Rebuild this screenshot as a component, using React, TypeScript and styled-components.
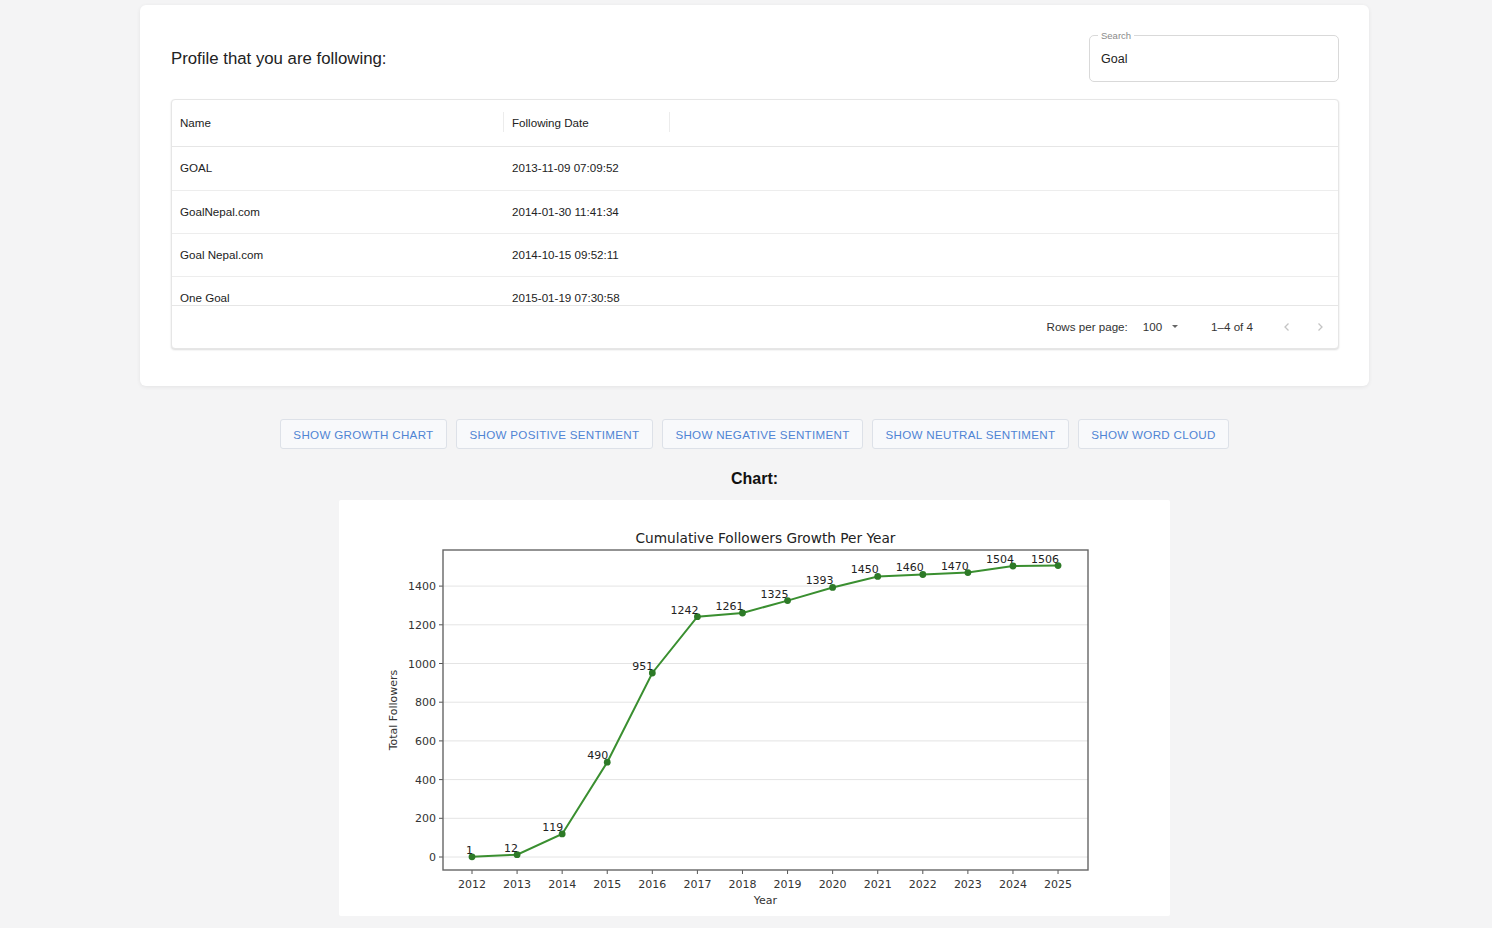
import React from 'react';
import styled, { createGlobalStyle } from 'styled-components';

const Global = createGlobalStyle`
  html, body { margin: 0; padding: 0; background: #f4f4f5; }
  body { font-family: "Liberation Sans", Arial, Helvetica, sans-serif; color: #222; }
  * { box-sizing: border-box; }
`;

const Page = styled.main`
  width: 1229px;
  margin-left: 140px;
  padding-top: 5px;
  display: flex;
  flex-direction: column;
  align-items: center;
`;

const Card = styled.section`
  width: 100%;
  height: 381px;
  background: #fff;
  border-radius: 6px;
  box-shadow: 0 1px 4px rgba(0, 0, 0, 0.07);
  padding: 30px 30px 0 31px;
`;

const CardHeader = styled.div`
  display: flex;
  justify-content: space-between;
  align-items: center;
  height: 47px;
  margin-bottom: 17px;
`;

const Title = styled.h2`
  margin: 0;
  font-size: 16.8px;
  font-weight: 400;
  color: #222;
  padding-top: 1px;
`;

const SearchBox = styled.div`
  position: relative;
  width: 250px;
  height: 47px;
  border: 1px solid #d9d9d9;
  border-radius: 5px;
  display: flex;
  align-items: center;
  padding-left: 11px;
  font-size: 12.5px;
  color: #222;
`;

const SearchLabel = styled.span`
  position: absolute;
  top: -6px;
  left: 8px;
  padding: 0 3px;
  background: #fff;
  font-size: 9.5px;
  line-height: 11px;
  color: #8a8a8a;
`;

const Grid = styled.div`
  width: 100%;
  border: 1px solid #e6e6e6;
  border-radius: 4px;
  box-shadow: 0 1px 2px rgba(0, 0, 0, 0.14);
  font-size: 11.6px;
  color: #222;
  background: #fff;
`;

const GridRow = styled.div<{ $head?: boolean; $first?: boolean }>`
  display: grid;
  grid-template-columns: 332px 166px 1fr;
  height: ${(p) => (p.$head ? '46px' : '43px')};
  align-items: center;
  padding-bottom: 2px;
  border-top: ${(p) => (p.$head || p.$first ? 'none' : '1px solid #ededed')};
`;

const HeadCell = styled.div<{ $sep?: boolean }>`
  position: relative;
  height: 100%;
  display: flex;
  align-items: center;
  padding-left: 8px;
  &::after {
    content: '';
    display: ${(p) => (p.$sep ? 'block' : 'none')};
    position: absolute;
    right: 0;
    top: 12px;
    height: 20px;
    width: 1px;
    background: #ececec;
  }
`;

const Cell = styled.div`
  padding-left: 8px;
`;

const GridBody = styled.div`
  height: 159px;
  overflow: hidden;
  border-top: 1px solid #e6e6e6;
`;

const Footer = styled.div`
  height: 43px;
  border-top: 1px solid #e6e6e6;
  display: flex;
  align-items: center;
  justify-content: flex-end;
  padding-right: 5px;
  padding-bottom: 1px;
  font-size: 11.6px;
  color: #333;
`;

const RowsLabel = styled.span`
  margin-right: 15px;
`;

const RowsSelect = styled.span`
  display: flex;
  align-items: center;
  gap: 10px;
  margin-right: 33px;
`;

const Caret = styled.span`
  width: 0;
  height: 0;
  border-left: 3.5px solid transparent;
  border-right: 3.5px solid transparent;
  border-top: 3.5px solid #666;
`;

const Range = styled.span`
  margin-right: 14px;
`;

const PageBtn = styled.span`
  width: 26px;
  height: 26px;
  display: flex;
  align-items: center;
  justify-content: center;
  color: #c4c4c4;
  margin-left: 7px;
`;

const ButtonRow = styled.div`
  margin-top: 33px;
  display: flex;
  gap: 9px;
`;

const ActionButton = styled.button`
  height: 30px;
  padding: 0 12.5px;
  border: 1px solid #dde1e8;
  border-radius: 3px;
  background: #f8f9fb;
  color: #4f84d4;
  font-family: "Liberation Sans", Arial, sans-serif;
  font-size: 11.6px;
  font-weight: 400;
  letter-spacing: 0.3px;
  text-transform: uppercase;
  cursor: pointer;
`;

const ChartHeading = styled.h3`
  margin: 20px 0 12px;
  font-size: 16px;
  line-height: 19px;
  font-weight: 700;
  color: #111;
`;

const ChartCard = styled.div`
  width: 831px;
  height: 416px;
  background: #fff;
  border-radius: 2px;
`;

const rows = [
  ['GOAL', '2013-11-09 07:09:52'],
  ['GoalNepal.com', '2014-01-30 11:41:34'],
  ['Goal Nepal.com', '2014-10-15 09:52:11'],
  ['One Goal', '2015-01-19 07:30:58'],
];

const buttons = [
  'Show Growth Chart',
  'Show Positive Sentiment',
  'Show Negative Sentiment',
  'Show Neutral Sentiment',
  'Show Word Cloud',
];

const data: [number, number][] = [
  [2012, 1], [2013, 12], [2014, 119], [2015, 490], [2016, 951], [2017, 1242],
  [2018, 1261], [2019, 1325], [2020, 1393], [2021, 1450], [2022, 1460],
  [2023, 1470], [2024, 1504], [2025, 1506],
];

const AX_L = 104;
const AX_R = 749;
const AX_T = 50;
const AX_B = 370;
const xp = (yr: number) => 133 + (yr - 2012) * 45.08;
const yp = (v: number) => 357 - v * 0.1935;

const GrowthChart: React.FC = () => {
  const yTicks = [0, 200, 400, 600, 800, 1000, 1200, 1400];
  const pts = data.map(([x, y]) => `${xp(x)},${yp(y)}`).join(' ');
  const font = '"DejaVu Sans", Verdana, sans-serif';
  return (
    <svg width={831} height={416} viewBox="0 0 831 416" fontFamily={font}>
      <text x={426.5} y={43} fontSize={13.7} textAnchor="middle" fill="#222">
        Cumulative Followers Growth Per Year
      </text>
      {yTicks.map((t) => (
        <g key={t}>
          <line x1={AX_L} x2={AX_R} y1={yp(t)} y2={yp(t)} stroke="#e4e4e4" strokeWidth={1} />
          <line x1={AX_L - 4} x2={AX_L} y1={yp(t)} y2={yp(t)} stroke="#555" strokeWidth={1} />
          <text x={AX_L - 7} y={yp(t) + 4} fontSize={11} textAnchor="end" fill="#333">
            {t}
          </text>
        </g>
      ))}
      {data.map(([yr]) => (
        <g key={yr}>
          <line x1={xp(yr)} x2={xp(yr)} y1={AX_B} y2={AX_B + 4} stroke="#555" strokeWidth={1} />
          <text x={xp(yr)} y={AX_B + 18} fontSize={11} textAnchor="middle" fill="#333">
            {yr}
          </text>
        </g>
      ))}
      <rect x={AX_L} y={AX_T} width={AX_R - AX_L} height={AX_B - AX_T} fill="none" stroke="#666" strokeWidth={1.4} />
      <polyline points={pts} fill="none" stroke="#3a8f30" strokeWidth={2} />
      {data.map(([x, y]) => (
        <circle key={x} cx={xp(x)} cy={yp(y)} r={3.4} fill="#2d7a27" />
      ))}
      {data.map(([x, y]) => (
        <text key={`l${x}`} x={xp(x) + 1} y={yp(y) - 3} fontSize={11} textAnchor="end" fill="#222">
          {y}
        </text>
      ))}
      <text x={426.5} y={404} fontSize={11} textAnchor="middle" fill="#333">
        Year
      </text>
      <text
        x={58}
        y={210}
        fontSize={11}
        textAnchor="middle"
        fill="#333"
        transform="rotate(-90 58 210)"
      >
        Total Followers
      </text>
    </svg>
  );
};

const ChevronLeft = () => (
  <svg width="10" height="10" viewBox="0 0 10 10">
    <path d="M6.5 1.5 L3 5 L6.5 8.5" fill="none" stroke="currentColor" strokeWidth="1.3" />
  </svg>
);

const ChevronRight = () => (
  <svg width="10" height="10" viewBox="0 0 10 10">
    <path d="M3.5 1.5 L7 5 L3.5 8.5" fill="none" stroke="currentColor" strokeWidth="1.3" />
  </svg>
);

export default function App() {
  return (
    <>
      <Global />
      <Page>
        <Card>
          <CardHeader>
            <Title>Profile that you are following:</Title>
            <SearchBox>
              <SearchLabel>Search</SearchLabel>
              Goal
            </SearchBox>
          </CardHeader>
          <Grid>
            <GridRow $head>
              <HeadCell $sep>Name</HeadCell>
              <HeadCell $sep>Following Date</HeadCell>
              <HeadCell />
            </GridRow>
            <GridBody>
              {rows.map(([n, d], i) => (
                <GridRow key={n} $first={i === 0}>
                  <Cell>{n}</Cell>
                  <Cell>{d}</Cell>
                  <Cell />
                </GridRow>
              ))}
            </GridBody>
            <Footer>
              <RowsLabel>Rows per page:</RowsLabel>
              <RowsSelect>
                100 <Caret />
              </RowsSelect>
              <Range>1–4 of 4</Range>
              <PageBtn>
                <ChevronLeft />
              </PageBtn>
              <PageBtn>
                <ChevronRight />
              </PageBtn>
            </Footer>
          </Grid>
        </Card>
        <ButtonRow>
          {buttons.map((b) => (
            <ActionButton key={b}>{b}</ActionButton>
          ))}
        </ButtonRow>
        <ChartHeading>Chart:</ChartHeading>
        <ChartCard>
          <GrowthChart />
        </ChartCard>
      </Page>
    </>
  );
}
